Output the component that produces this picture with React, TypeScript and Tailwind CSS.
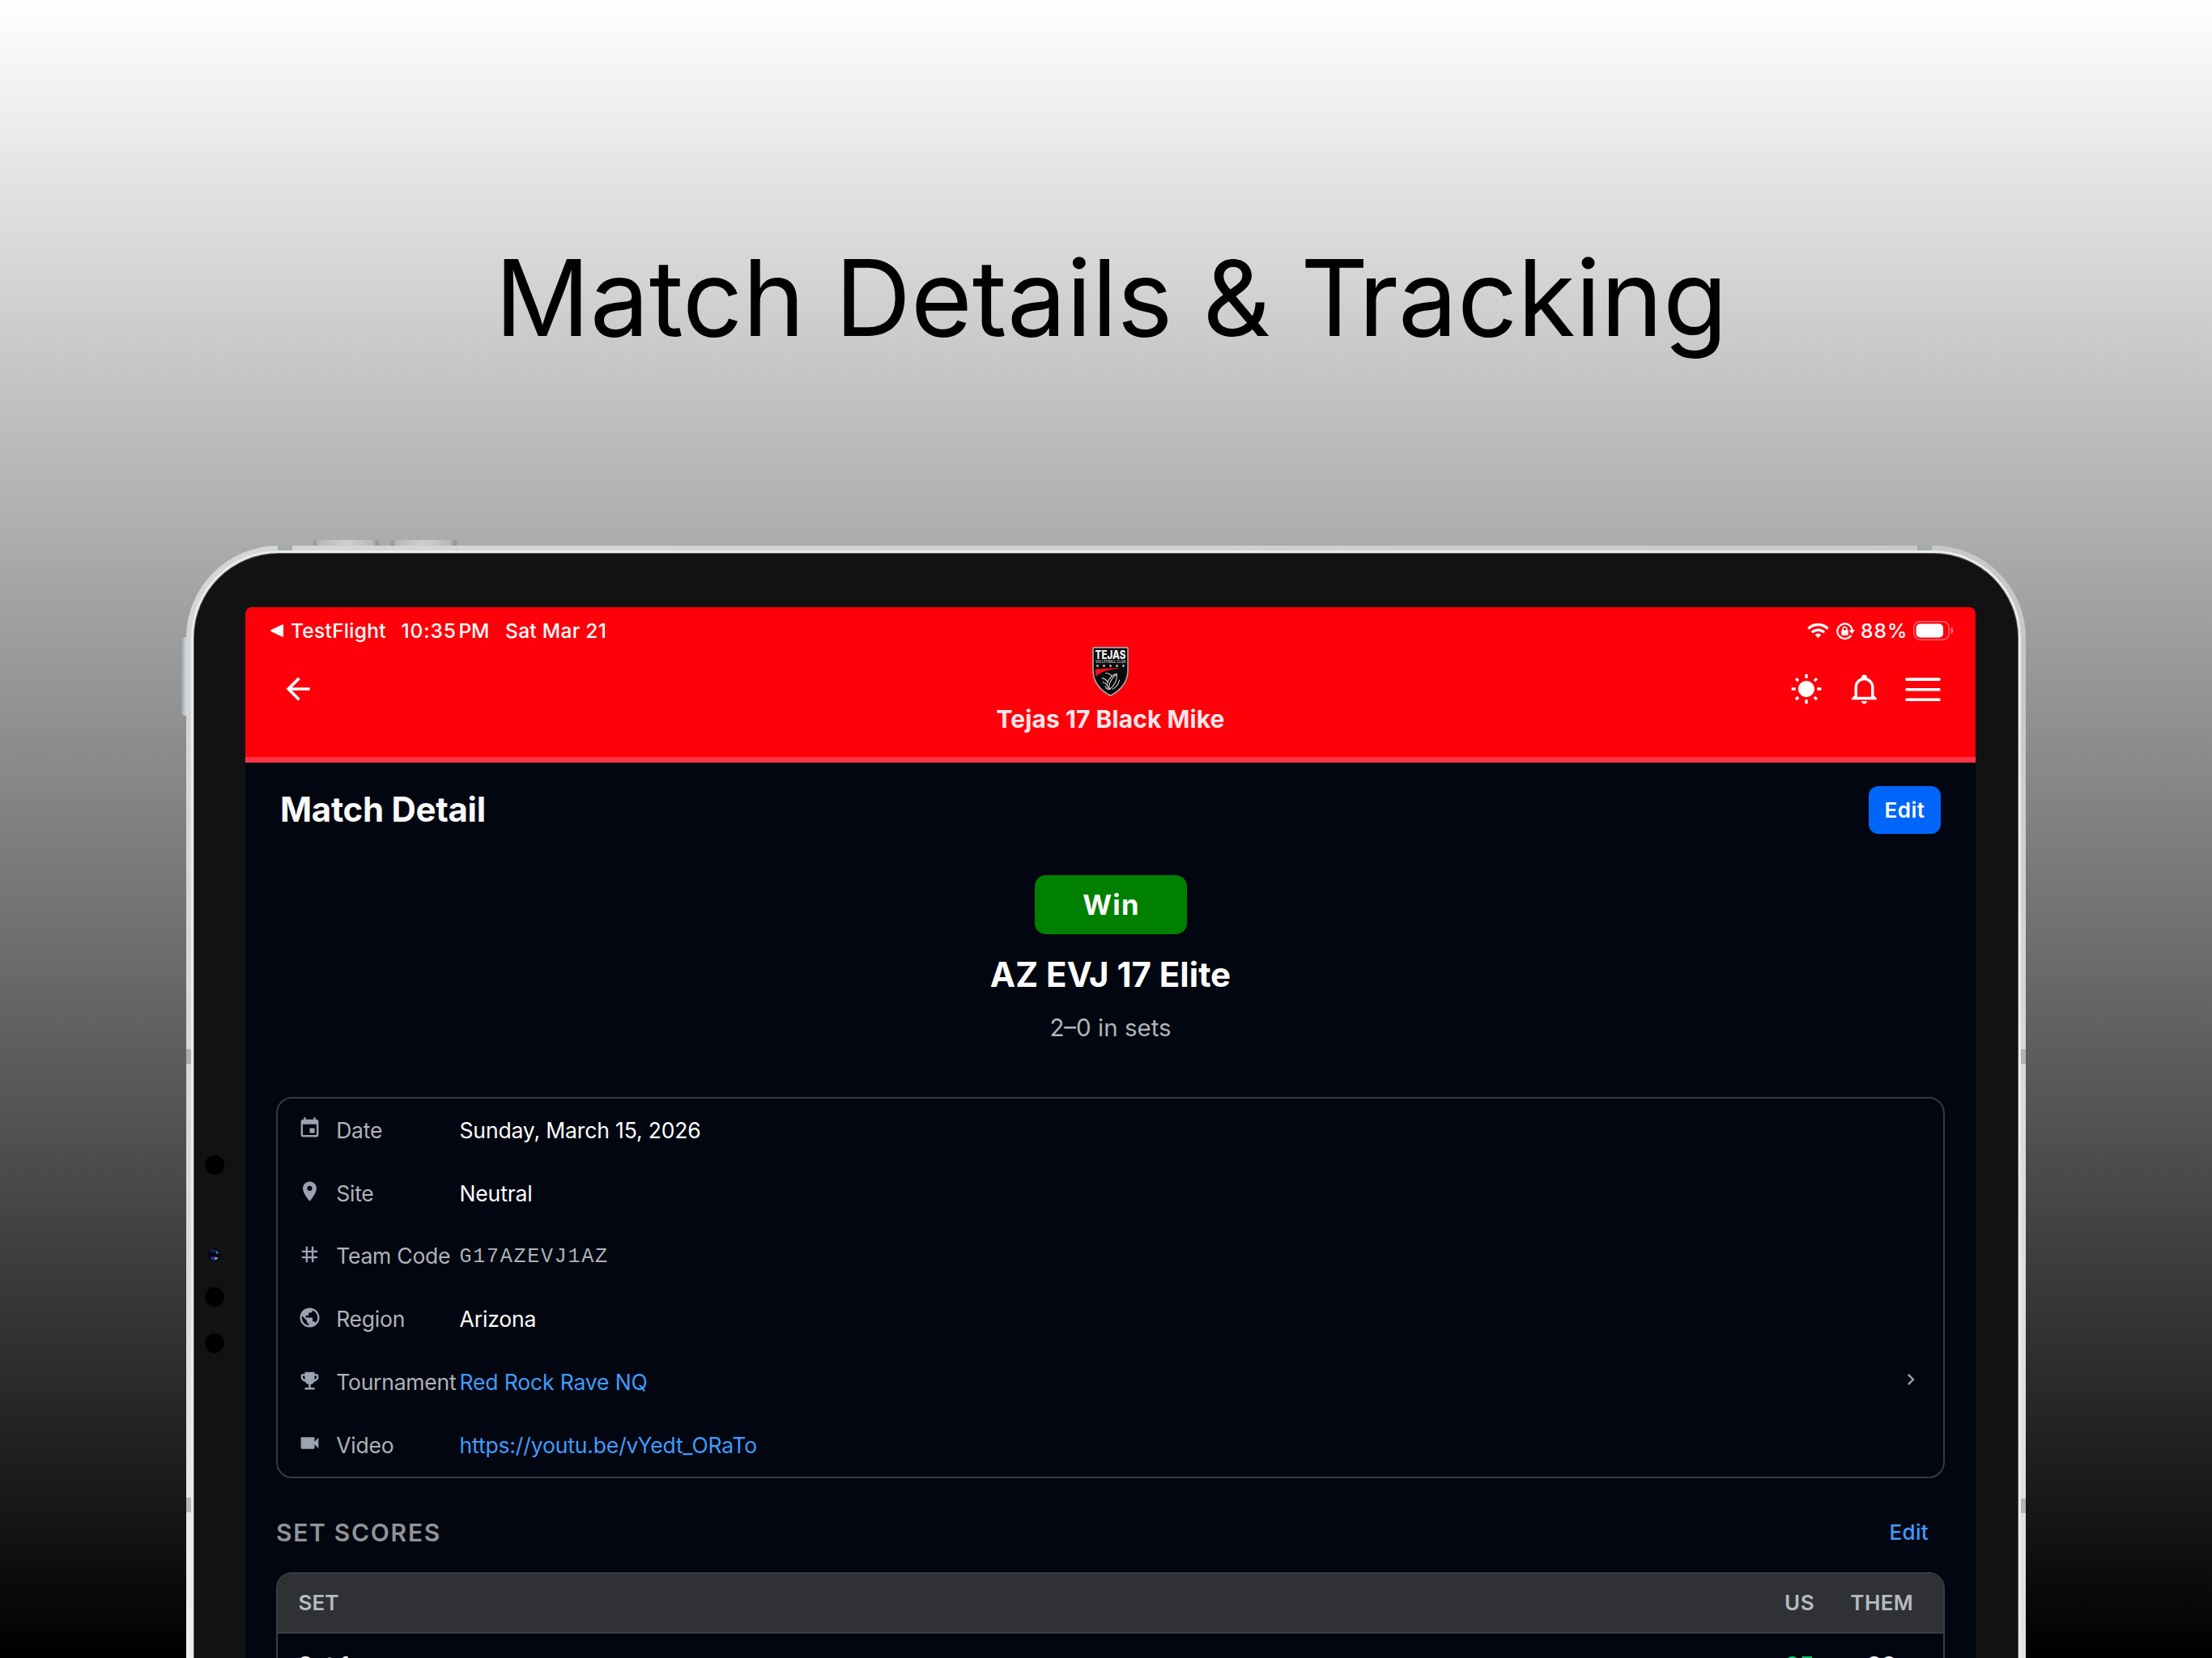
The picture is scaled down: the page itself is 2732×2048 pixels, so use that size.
import type { ReactNode } from 'react';
import { MdChevronRight, MdEmojiEvents, MdEvent, MdPlace, MdPublic, MdTag, MdVideocam } from 'react-icons/md';

type DetailRowProps = {
  icon: ReactNode;
  label: string;
  children: ReactNode;
  chevron?: boolean;
};

const BackIcon = () => (
  <svg viewBox="0 0 24 24" className="h-11 w-11 fill-white">
    <path d="M20,11V13H8L13.5,18.5L12.08,19.92L4.16,12L12.08,4.08L13.5,5.5L8,11H20Z" />
  </svg>
);

const SunIcon = () => (
  <svg viewBox="0 0 24 24" className="h-10 w-10 fill-white">
    <path d="M3.55 19.09L4.96 20.5L6.76 18.71L5.34 17.29M12 6C8.69 6 6 8.69 6 12S8.69 18 12 18 18 15.31 18 12C18 8.68 15.31 6 12 6M20 13H23V11H20M17.24 18.71L19.04 20.5L20.45 19.09L18.66 17.29M20.45 5L19.04 3.6L17.24 5.39L18.66 6.81M13 1H11V4H13M6.76 5.39L4.96 3.6L3.55 5L5.34 6.81L6.76 5.39M1 13H4V11H1M13 20H11V23H13" />
  </svg>
);

const BellIcon = () => (
  <svg viewBox="0 0 24 24" className="h-[41px] w-[41px] fill-white">
    <path d="M10 21H14C14 22.1 13.1 23 12 23S10 22.1 10 21M21 19V20H3V19L5 17V11C5 7.9 7.03 5.17 10 4.29V4A2 2 0 0 1 12 2A2 2 0 0 1 14 4V4.29C16.97 5.17 19 7.9 19 11V17L21 19M17 11A5 5 0 0 0 12 6A5 5 0 0 0 7 11V18H17V11Z" />
  </svg>
);

const MenuIcon = () => (
  <svg viewBox="0 0 44 30" className="h-[30px] w-11 fill-white">
    <rect x="0.3" y="1.3" width="43.4" height="3.6" rx="1.5" />
    <rect x="0.3" y="13.9" width="43.4" height="3.6" rx="1.5" />
    <rect x="0.3" y="26.4" width="43.4" height="3.6" rx="1.5" />
  </svg>
);

const WifiIcon = () => (
  <svg viewBox="0 0 27 18" className="h-[18px] w-[27px]" fill="none" stroke="white" strokeWidth="3.2">
    <path d="M1.4 6.6a17 17 0 0 1 24.2 0" />
    <path d="M5.9 11.2a10.7 10.7 0 0 1 15.2 0" />
    <path d="M13.5 18l-3.9-3.9a5.5 5.5 0 0 1 7.8 0z" fill="white" stroke="none" />
  </svg>
);

const RotationLockIcon = () => (
  <svg viewBox="0 0 23 21" className="h-[21px] w-[23px]" fill="none" stroke="white">
    <path d="M18.3 15.6a9.2 9.2 0 1 1 1.3-6.3" strokeWidth="2.2" />
    <path d="M15.6 9h7.4l-3.7 5z" fill="white" stroke="none" />
    <rect x="6.3" y="9.2" width="8.4" height="6.5" rx="1.2" fill="white" stroke="none" />
    <path d="M8.1 9.8V7.9a2.4 2.4 0 0 1 4.8 0v1.9" strokeWidth="1.4" />
  </svg>
);

const BatteryIcon = () => (
  <svg viewBox="0 0 50 24" className="h-6 w-[50px]">
    <rect x="0.8" y="0.8" width="43.4" height="22.4" rx="7.6" fill="none" stroke="white" strokeOpacity="0.42" strokeWidth="1.5" />
    <rect x="3.6" y="3.6" width="33.4" height="16.8" rx="5" fill="white" />
    <path d="M46.6 8v8c1.7-.7 2.8-2.2 2.8-4s-1.1-3.3-2.8-4z" fill="white" fillOpacity="0.5" />
  </svg>
);

const ClubLogo = () => (
  <svg viewBox="0 0 45 61" className="h-[61px] w-[45px]">
    <path d="M2.5 .8h40c.9 0 1.500.6 1.500 1.500v26c0 14.500-8 25-21.500 32C9 53.300 1 42.800 1 28.300v-26C1 1.400 1.600.8 2.500.8z" fill="#0a0a0a" stroke="#a3a3a6" strokeWidth="1.7" />
    <text x="22.5" y="14.6" textAnchor="middle" textLength="38" lengthAdjust="spacingAndGlyphs" fontFamily="Inter, sans-serif" fontWeight="800" fontSize="14.2" fill="#f2f2f2">TEJAS</text>
    <text x="22.5" y="20" textAnchor="middle" textLength="37" lengthAdjust="spacingAndGlyphs" fontFamily="Inter, sans-serif" fontWeight="600" fontSize="4.6" fill="#c4c4c4">VOLLEYBALL CLUB</text>
    <g fill="#dcdcdc">
      {[6.5, 14.5, 22.5, 30.5, 38.5].map((x) => (
        <path key={x} transform={`translate(${x} 23.3)`} d="M0-1.900L.6-.6 1.900-.5.9.5 1.200 1.800 0 1.100-1.200 1.800-.9.5-1.900-.5-.6-.6z" />
      ))}
    </g>
    <path d="M3.800 27.800C14 26.300 26 26.200 39.500 26.200 25 27 12 29.200 4.900 36.500 4 33.800 3.800 31 3.800 27.800z" fill="#f5101c" />
    <g fill="none" stroke="#d6d6d6" strokeWidth="1.1" strokeLinecap="round">
      <path d="M16.500 32.500c3.500.1 6 1.200 7.800 3.600 1.800-1.800 3.400-2.500 5.600-2.600" />
      <path d="M12 38.500c3 .7 5.500 2.300 7.200 4.800" />
      <path d="M12.800 43.500c2.500.6 4.200 1.800 5.600 3.800" />
      <path d="M24.300 36.100c-3.700 3.600-5.700 7.600-5.900 11.200.6 2.500 1.800 4.200 3.300 5.200" />
      <path d="M30 33.500c1.500 5.500-1.700 13.500-8.300 19-2.600-4.500 1-13 8.300-19z" />
      <path d="M33.500 41c-.8 4.800-3.800 8.800-8.300 11.200" />
      <path d="M16 48.800c.8 1.900 2.200 3.300 4 4" />
    </g>
  </svg>
);

const StatusBar = () => (
  <div className="flex h-[58px] items-center pr-[27px] pl-[31px] text-[24.5px] leading-[30px] font-medium whitespace-nowrap text-white">
    <svg viewBox="0 0 16 16" className="h-4 w-4 fill-white">
      <path d="M.8 7.100 14.500.4c.8-.4 1.500 0 1.500.9v13.400c0 .9-.7 1.300-1.500.9L.8 8.900c-.9-.4-.9-1.400 0-1.800z" />
    </svg>
    <span className="ml-[9px] w-[136.5px] tracking-[0.28px]">TestFlight</span>
    <span className="w-[71px] tracking-[0.9px]">10:35</span>
    <span className="w-[57.5px] tracking-[-0.2px]">PM</span>
    <span className="tracking-[0.3px]">Sat Mar 21</span>
    <div className="ml-auto flex items-center">
      <WifiIcon />
      <div className="ml-[9px]"><RotationLockIcon /></div>
      <span className="ml-[7px] w-[65px] tracking-[1.1px]">88%</span>
      <BatteryIcon />
    </div>
  </div>
);

const Header = () => (
  <header className="h-[192px] border-b-[7px] border-[#ff3347] bg-[#ff000b]">
    <StatusBar />
    <div className="grid grid-cols-[1fr_auto_1fr]">
      <div className="flex h-[86px] items-center pl-[43px]">
        <BackIcon />
      </div>
      <div className="-mt-[9px] flex flex-col items-center">
        <ClubLogo />
        <p className="mt-[7.5px] text-[30px] leading-10 font-bold tracking-[0.06px] text-[#ffe6ea]">Tejas 17 Black Mike</p>
      </div>
      <div className="flex h-[85px] items-center justify-end gap-[30.5px] pr-[43px]">
        <SunIcon />
        <BellIcon />
        <MenuIcon />
      </div>
    </div>
  </header>
);

const DetailRow = ({ icon, label, children, chevron }: DetailRowProps) => (
  <div className="flex h-[77.8px] items-center px-[25px] text-[26.5px] leading-9 whitespace-nowrap">
    <div className="mb-1 w-[47.2px] text-[29px] text-[#9aa3af]">{icon}</div>
    <span className="w-[152.3px] tracking-[-0.23px] text-[#b0b3b8]">{label}</span>
    <span className="flex-1 tracking-[-0.14px]">{children}</span>
    {chevron && <MdChevronRight className="mr-px mb-[7px] text-[28px] text-[#9aa3af]" />}
  </div>
);

const MatchCard = () => (
  <div className="mt-[66px] rounded-[20px] border-2 border-[#363a3d] text-white">
    <DetailRow icon={<MdEvent />} label="Date">Sunday, March 15, 2026</DetailRow>
    <DetailRow icon={<MdPlace />} label="Site">Neutral</DetailRow>
    <DetailRow icon={<MdTag />} label="Team Code">
      <span className="font-['Liberation_Mono',monospace] text-[25px] tracking-[1.75px] text-[#b0b3b8]">G17AZEVJ1AZ</span>
    </DetailRow>
    <DetailRow icon={<MdPublic />} label="Region">Arizona</DetailRow>
    <DetailRow icon={<MdEmojiEvents />} label="Tournament" chevron>
      <span className="text-[#409cff]">Red Rock Rave NQ</span>
    </DetailRow>
    <DetailRow icon={<MdVideocam />} label="Video">
      <span className="text-[#409cff]">https://youtu.be/vYedt_ORaTo</span>
    </DetailRow>
  </div>
);

const SetScores = () => (
  <section>
    <div className="flex h-[116px] items-center justify-between pt-[19px] pr-5">
      <h3 className="text-[30px] leading-9 font-semibold tracking-[1.7px] text-[#929396]">SET SCORES</h3>
      <button className="text-[26px] leading-9 font-medium tracking-[0.36px] text-[#409cff]">Edit</button>
    </div>
    <div className="h-[200px] overflow-hidden rounded-t-[20px] border-2 border-[#3a3e40]">
      <div className="flex h-[74px] items-center border-b-2 border-[#3a3e40] bg-[#303135] pr-[25px] pl-[25.5px] text-[26px] font-semibold text-[#b6bbbf]">
        <span className="flex-1">SET</span>
        <span className="w-[101.5px] text-center tracking-[0.8px]">US</span>
        <span className="w-[101.5px] text-center tracking-[0.37px]">THEM</span>
      </div>
      <div className="flex h-[78px] items-center px-[25px] text-[28px] font-semibold text-white">
        <span className="flex-1">Set 1</span>
        <span className="w-[101.5px] text-center font-bold text-[#10c46c]">25</span>
        <span className="w-[101.5px] text-center font-bold">20</span>
      </div>
    </div>
  </section>
);

const Screen = () => (
  <div className="h-[1400px] w-[2137px] overflow-hidden rounded-t-[8px] bg-[#020610]">
    <Header />
    <div className="flex items-start justify-between px-[43px] pt-[29px]">
      <h2 className="text-[42px] leading-[57px] font-bold tracking-[-0.3px] text-[#f9fafb]">Match Detail</h2>
      <button className="h-[59px] w-[89px] rounded-[12px] bg-[#0066f9] text-[26px] font-semibold tracking-[0.5px] text-white">Edit</button>
    </div>
    <main className="px-[38px]">
      <div className="flex flex-col items-center">
        <div className="mt-[51px] flex h-[73px] w-[188px] items-center justify-center rounded-[14px] bg-[#008000] pl-[2px] text-[34.5px] font-bold tracking-[1.3px] text-white">
          Win
        </div>
        <h1 className="mt-[25px] text-[42px] leading-[50px] font-bold text-white">AZ EVJ 17 Elite</h1>
        <p className="mt-5 text-[29.5px] leading-10 text-[#b0b5ba]">2–0 in sets</p>
      </div>
      <MatchCard />
      <SetScores />
    </main>
  </div>
);

const Tablet = () => (
  <div className="relative mx-auto w-[2272px]">
    {/* volume and power buttons */}
    <div className="absolute -top-[7px] left-[157px] h-[7px] w-[81px] rounded-t-[4px] bg-[linear-gradient(90deg,#8a8c8c,#b6b9b8_8%,#cdd0cf_50%,#b6b9b8_90%,#8a8c8c)]" />
    <div className="absolute -top-[7px] left-[253px] h-[7px] w-[81px] rounded-t-[4px] bg-[linear-gradient(90deg,#8a8c8c,#b6b9b8_8%,#cdd0cf_50%,#b6b9b8_90%,#8a8c8c)]" />
    <div className="absolute top-[113px] -left-[6px] h-[97px] w-[6px] rounded-l-[4px] bg-[linear-gradient(90deg,#93a0a8,#d6d8da)]" />

    <div className="rounded-t-[114px] bg-[linear-gradient(100deg,#d4d6d7_0%,#d0d2d2_45%,#c4c6c6_100%)] px-[6px] pt-[6px]">
      <div className="rounded-t-[108px] bg-[#eaebec] px-[3px] pt-[3px]">
        <div className="rounded-t-[105px] bg-[#555a56] px-px pt-px">
          <div className="flex justify-center rounded-t-[104px] bg-[#121212] pt-[66px] pl-[11px]">
            <Screen />
          </div>
        </div>
      </div>
    </div>

    {/* side rails brighten toward the bottom */}
    <div className="absolute top-[340px] left-0 h-[1060px] w-[6px] bg-[linear-gradient(180deg,#d4d6d7,#d8d9da_50%,#f0f3f7)]" />
    <div className="absolute top-[115px] right-0 h-[1285px] w-[6px] bg-[linear-gradient(180deg,#c4c6c6,#dcdddd_50%,#e2e2e2)]" />

    {/* antenna bands */}
    <div className="absolute top-0 left-[113px] h-[6px] w-[18px] bg-[#a6aaab]" />
    <div className="absolute top-0 right-[116px] h-[6px] w-[18px] bg-[#a6aaab]" />
    <div className="absolute top-[622px] left-0 h-[18px] w-[6px] bg-[#adadaf]" />
    <div className="absolute top-[622px] right-0 h-[18px] w-[6px] bg-[#b0b2b3]" />
    <div className="absolute top-[1176px] left-0 h-[18px] w-[6px] bg-[#b7b8bb]" />
    <div className="absolute top-[1177px] right-0 h-[18px] w-[6px] bg-[#b3b4b6]" />

    {/* sensors and camera */}
    <div className="absolute top-[752.5px] left-[23px] h-6 w-6 rounded-full bg-black" />
    <div className="absolute top-[866px] left-[25px] h-5 w-5 rounded-full bg-[#10131a]" />
    <svg viewBox="0 0 16 16" className="absolute top-[868px] left-[27px] h-4 w-4">
      <circle cx="8" cy="8" r="8" fill="#05060f" />
      <path d="M2 4.500A8 8 0 0 1 8 .8v4.700z" fill="#16205c" />
      <path d="M9 2.500a6 6 0 0 1 4.800 3.700L10 7z" fill="#2f6d92" />
      <path d="M2.500 11.500l5-1.500v5a7 7 0 0 1-5-3.500z" fill="#3a33a8" />
      <path d="M8 10.500l4.500 1a6 6 0 0 1-4 3z" fill="#8fa6c9" />
    </svg>
    <div className="absolute top-[915.5px] left-[23px] h-6 w-6 rounded-full bg-black" />
    <div className="absolute top-[972.5px] left-[23px] h-6 w-6 rounded-full bg-black" />
  </div>
);

export default function App() {
  return (
    <div className="h-[2048px] w-[2732px] overflow-hidden bg-[linear-gradient(180deg,#fff,#000)] font-['Inter',sans-serif]">
      <p className="h-[674px] pt-[302px] pl-[13px] text-center text-[130px] leading-[131px] text-black [word-spacing:0.4px]">
        Match Details &amp; <span className="tracking-[-12px]">T</span>racking
      </p>
      <Tablet />
    </div>
  );
}
